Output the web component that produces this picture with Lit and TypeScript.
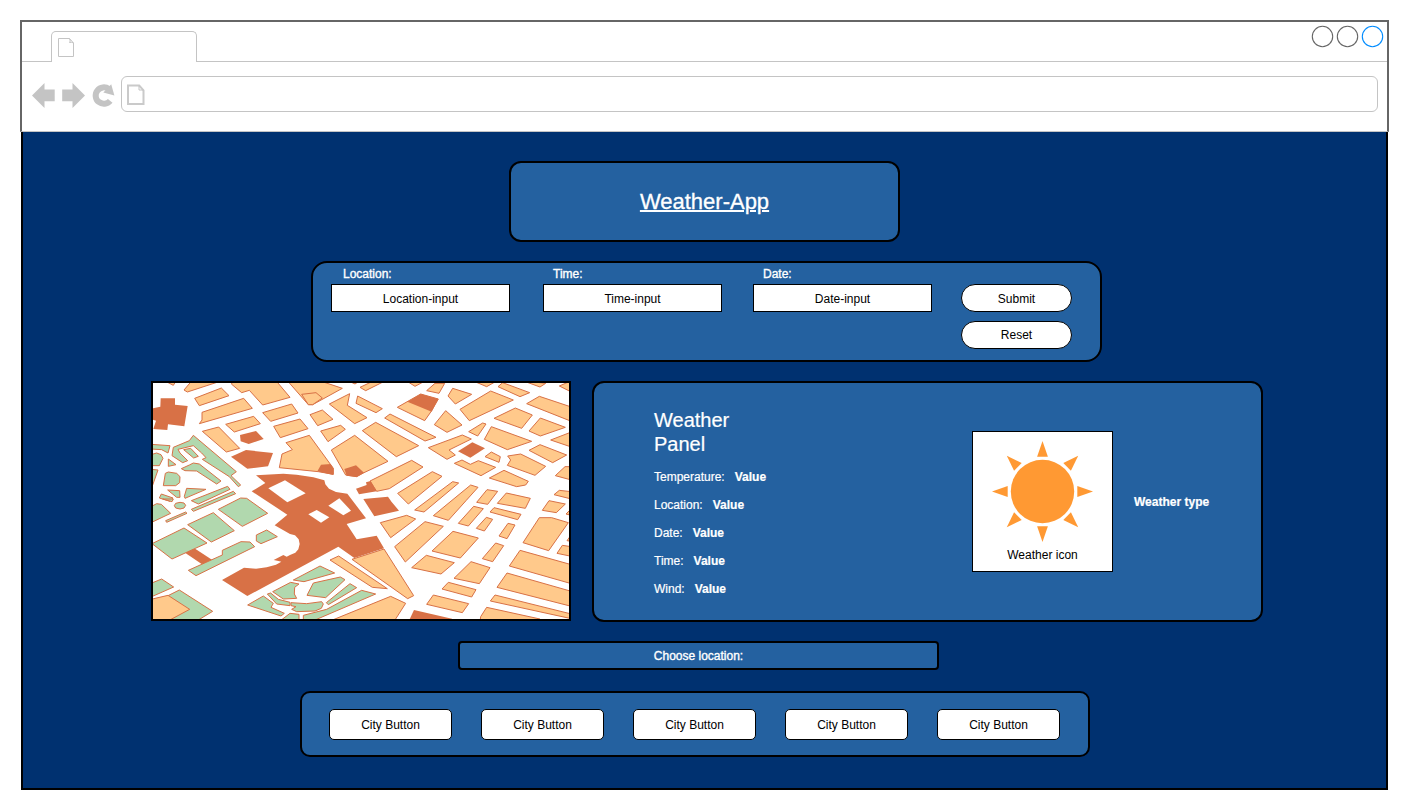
import { LitElement, html, svg, css } from "lit";
import { customElement, property } from "lit/decorators.js";

type Kind = "o" | "g" | "d" | "w";
interface Sector { x: number; y: number; shapes: [Kind, string][]; }

// City blocks, three units to a pixel: o = houses, g = parks, d = landmarks, w = courtyards.
const SECTORS: Sector[] = [
  { x: 0, y: 0, shapes: [
    ["o", "45,3 70,16 78,3"],
    ["o", "124,4 102,30 112,36 210,4"],
    ["o", "134,55 214,24 237,47 148,77"],
    ["o", "156,97 281,55 307,85 148,131 156,120"],
    ["o", "244,12 252,2 378,2 420,52 338,75 298,31 275,38"],
    ["o", "338,98 425,72 444,99 362,124"],
    ["o", "371,139 450,117 474,146 391,173"],
    ["o", "227,133 311,109 331,131 253,156"],
    ["o", "157,154 206,141 269,205 229,216"],
    ["o", "408,188 478,166 550,265 550,283 505,275 388,263 396,222 427,209"],
    ["d", "32,55 75,55 75,74 113,78 103,139 54,133 52,150 10,147 18,122 5,118 5,86 31,80"],
    ["d", "270,165 318,153 341,177 296,192 272,184"],
    ["d", "243,230 288,210 369,219 354,259 292,266"],
    ["d", "318,286 400,281 440,284 490,292 523,301 526,313 537,326 558,336 592,341 648,415 590,432 620,478 680,467 702,505 613,534 565,500 292,648 216,600 282,563 318,566 350,562 378,554 394,545 385,543 371,540 400,525 410,530 420,525 436,518 445,508 449,492 446,478 435,466 420,462 374,436 412,404 345,360 305,334 346,309"],
    ["w", "355,325 405,301 467,340 412,367"],
    ["g", "3,193 60,197 54,219 35,209 3,207"],
    ["g", "3,224 20,219 33,224 39,235 28,257 3,257"],
    ["g", "3,268 24,270 7,318 3,318"],
    ["g", "55,237 78,254 55,259"],
    ["g", "46,280 55,276 80,280 90,290 89,308 77,317 40,317"],
    ["g", "53,330 89,332 90,352 80,352"],
    ["g", "110,325 168,328 105,355 103,349"],
    ["g", "28,354 34,342 69,354 60,364"],
    ["g", "70,202 118,182 130,166 259,275 243,287 272,315 265,320 238,290 157,238 168,233 155,219 130,197 84,208 90,219 113,242 98,248 66,227"],
    ["g", "101,209 122,205 145,229 131,234"],
    ["g", "94,266 118,255 130,249 148,252 213,303 200,312 140,273 105,272"],
    ["g", "124,362 233,319 240,328 145,372"],
    ["g", "124,388 250,334 257,341 130,394"],
  ]},
  { x: 420, y: 0, shapes: [
    ["o", "-8,2 88,2 157,25 68,74 55,74"],
    ["o", "35,43 78,38 97,54 68,74 55,74"],
    ["o", "60,104 97,90 129,118 83,137"],
    ["o", "92,153 152,136 166,148 114,185"],
    ["o", "118,72 179,41 172,76 231,113 194,131"],
    ["o", "203,48 277,86 258,98 198,70"],
    ["o", "210,22 250,3 285,3 227,32"],
    ["o", "176,3 208,3 195,12"],
    ["o", "350,3 375,19 405,3"],
    ["o", "322,82 392,42 445,57 423,95 404,122"],
    ["d", "352,65 392,42 445,57 425,95"],
    ["o", "284,114 300,102 438,172 405,183"],
    ["o", "217,152 257,127 386,197 319,230"],
    ["o", "323,340 427,275 456,289 355,372"],
    ["d", "93,254 122,252 130,265 130,285 82,274"],
    ["o", "124,210 194,166 294,244 222,278 200,290 167,285"],
    ["d", "163,267 198,256 222,278 200,291 170,287"],
    ["o", "240,303 365,241 399,261 298,326 260,334"],
    ["d", "198,326 230,315 228,307 242,303 260,334 207,343"],
    ["d", "220,357 294,350 305,366 327,392 253,409"],
  ]},
  { x: 840, y: 0, shapes: [
    ["o", "-10,32 15,10 44,10 27,40"],
    ["o", "68,25 125,43 76,72 54,48"],
    ["o", "90,88 182,33 250,60 118,122"],
    ["o", "130,3 200,3 170,20"],
    ["o", "204,20 218,8 299,38 270,50"],
    ["o", "278,2 347,10 330,21"],
    ["o", "388,18 422,3 424,36"],
    ["o", "290,71 328,49 424,81 424,124"],
    ["o", "192,115 256,84 307,105 275,145"],
    ["o", "297,153 331,114 406,142 331,168"],
    ["o", "362,180 424,156 424,201"],
    ["o", "13,134 47,92 96,135 51,157"],
    ["o", "116,155 158,129 168,132 143,168"],
    ["o", "163,178 184,140 305,184 232,209"],
    ["o", "-5,203 97,165 124,177 57,210 76,225 51,238"],
    ["d", "84,214 127,187 165,205 121,233"],
    ["o", "73,250 96,240 121,253 145,242 197,262 153,287"],
    ["o", "165,230 184,216 211,230 207,247"],
    ["o", "233,228 272,222 347,259 315,286 232,256 242,240"],
    ["o", "297,211 330,194 410,225 368,248"],
    ["o", "376,287 405,260 424,260 424,300"],
    ["o", "178,294 222,271 295,304 287,315 260,320"],
    ["o", "-46,390 68,305 86,309 -18,396"],
    ["o", "10,407 122,315 144,322 108,362 55,421"],
    ["o", "140,367 171,329 203,334 173,373"],
    ["o", "202,370 229,339 301,355 286,385"],
    ["o", "372,344 388,331 424,335 424,357"],
  ]},
  { x: 0, y: 360, shapes: [
    ["d", "105,158 132,144 187,180 156,193"],
    ["g", "205,28 272,-6 290,-5 353,40 277,79"],
    ["g", "113,74 190,38 253,92 184,126"],
    ["g", "6,131 102,84 171,129 66,177"],
    ["g", "115,211 217,165 217,151 273,125 300,126 314,140 138,227"],
    ["g", "319,105 350,90 382,110 333,131 319,123"],
    ["g", "3,250 35,237 71,261 3,291"],
    ["g", "52,288 88,270 188,334 140,363 58,363"],
    ["o", "3,298 54,286 119,328 54,363 3,363"],
    ["g", "73,17 77,10 90,7 102,9 107,16 102,24 90,27 77,24"],
    ["g", "47,62 107,36 111,40 50,67"],
    ["g", "3,20 20,11 34,13 62,40 3,68"],
    ["g", "38,-3 70,-3 66,5"],
    ["g", "293,315 340,288 370,310 363,322 403,340 393,348"],
    ["g", "352,282 362,279 385,298 420,307 420,317 380,312"],
    ["g", "368,275 422,247 447,252 434,262 433,282 440,295 400,297"],
    ["g", "390,363 420,340 447,343 447,363"],
  ]},
  { x: 420, y: 360, shapes: [
    ["w", "55,43 80,30 118,52 93,68"],
    ["w", "115,17 148,-5 183,32 160,46"],
    ["o", "271,68 350,46 377,57 302,113"],
    ["o", "186,178 282,147 371,287 353,296"],
    ["o", "120,180 146,168 292,266 247,262"],
    ["o", "120,363 302,289 347,310 313,363"],
    ["o", "314,140 405,65 460,79 346,186"],
    ["o", "365,203 409,166 493,188 453,222"],
    ["g", "10,240 90,198 134,219 42,245"],
    ["g", "51,286 70,249 151,231 165,239 107,293"],
    ["g", "3,308 50,311 95,305 100,312 94,325 75,333 20,335 5,328 18,320 3,317"],
    ["g", "109,308 180,251 200,263 115,314"],
    ["g", "40,346 110,328 215,271 257,282 80,358 40,363"],
  ]},
  { x: 840, y: 360, shapes: [
    ["o", "357,2 406,12 379,38 337,31"],
    ["o", "85,70 131,19 160,26 115,78"],
    ["o", "139,85 169,52 188,58 163,93"],
    ["o", "180,36 192,23 273,43 263,59"],
    ["o", "207,108 234,70 255,75 231,116"],
    ["o", "279,128 328,53 365,53 415,68 356,152"],
    ["o", "408,42 424,26 424,46"],
    ["o", "411,122 424,104 424,124"],
    ["o", "381,160 397,136 424,140 424,169"],
    ["o", "6,153 69,94 145,114 91,174"],
    ["o", "157,176 197,129 221,137 188,185"],
    ["o", "72,235 123,185 180,203 148,251"],
    ["o", "238,198 270,151 424,194 424,251"],
    ["o", "201,262 231,219 424,274 424,319"],
    ["o", "36,267 55,247 138,269 125,291"],
    ["o", "181,303 195,285 424,342 424,356"],
    ["o", "-10,313 10,285 116,311 97,338"],
    ["o", "152,350 170,322 330,357 330,366 150,366"],
    ["d", "-65,366 -48,330 66,356 66,366"],
  ]},
];

@customElement("city-map")
class CityMap extends LitElement {
  static styles = css`
    :host { display: block; box-sizing: border-box; border: 2px solid #000; background: #fff; }
    svg { display: block; width: 100%; height: 100%; }
    polygon { stroke: #d87146; stroke-width: 3; }
    .o { fill: #ffc98b; }
    .g { fill: #b1d8ae; }
    .d { fill: #d87146; stroke: none; }
    .w { fill: #fff; stroke: none; }
  `;
  render() {
    return html`<svg viewBox="9 9 1248 708" preserveAspectRatio="none">
      ${SECTORS.map((s) => svg`<g transform="translate(${s.x} ${s.y})">
        ${s.shapes.map(([k, p]) => svg`<polygon class=${k} points=${p}></polygon>`)}
      </g>`)}
    </svg>`;
  }
}

@customElement("browser-chrome")
class BrowserChrome extends LitElement {
  static styles = css`
    :host { display: block; box-sizing: border-box; background: #fff; }
    .strip { display: flex; height: 40px; align-items: flex-end; }
    .lead { width: 29px; border-bottom: 1px solid #c4c4c4; }
    .tab { box-sizing: border-box; width: 146px; height: 31px; border: 1px solid #c4c4c4; border-bottom: 0; border-radius: 5px 5px 0 0; padding: 6px 0 0 6px; }
    .rest { flex: 1; height: 39px; border-bottom: 1px solid #c4c4c4; display: flex; justify-content: flex-end; gap: 3px; }
    .rest svg { margin-top: 3px; overflow: visible; }
    .rest svg:last-child { margin-right: 4px; }
    svg { display: block; fill: none; }
    .bar { display: flex; padding: 14px 9px 0 9px; }
    .nav { flex: none; margin-top: 5px; }
    .address { flex: 1; box-sizing: border-box; height: 36px; border: 1px solid #c4c4c4; border-radius: 6px; margin-left: 5px; padding: 7px 0 0 5px; }
  `;
  private dot(color: string) {
    return html`<svg width="22" height="22"><circle cx="11.5" cy="11.5" r="10.2" stroke=${color} stroke-width="1.1"></circle></svg>`;
  }
  render() {
    return html`
      <div class="strip">
        <div class="lead"></div>
        <div class="tab"><svg width="17" height="20"><path d="M.5.5H11.5L15.5 5V18.5H.5ZM11.5.5Q13 3.5 11.5 4.5 14 3.8 15.5 5" stroke="#c4c4c4"></path></svg></div>
        <div class="rest">${this.dot("#666")}${this.dot("#666")}${this.dot("#008cff")}</div>
      </div>
      <div class="bar">
        <svg class="nav" width="85" height="28" viewBox="0 0 85 28">
          <path fill="#c4c4c4" d="M1 14.5 13.5 2V8.5H23.7V20.2H13.5V27ZM54 14.5 41.5 2V8.5H31.2V20.2H41.5V27Z"></path>
          <path stroke="#c4c4c4" stroke-width="6" d="M79.2 19.8A8.2 8.2 0 1 1 77.8 8"></path>
          <path fill="#c4c4c4" d="M72.3 11.6 80.2 3.2 83.4 14.6Z"></path>
        </svg>
        <div class="address"><svg width="19" height="22"><path d="M1 1.5H12.2L16.5 6.3V20H1Z" stroke="#cacaca" stroke-width="2"></path><path d="M12 1.5V6H16.5" stroke="#c4c4c4"></path></svg></div>
      </div>`;
  }
}

@customElement("input-field")
class InputField extends LitElement {
  @property() label = "";
  @property() hint = "";
  static styles = css`
    :host { display: block; width: 179px; }
    .label { height: 21px; line-height: 22px; padding-left: var(--label-inset, 12px); color: #fff; -webkit-text-stroke: 0.35px #fff; }
    .box { box-sizing: border-box; height: 28px; border: 1px solid #000; background: #fff; color: #000; text-align: center; line-height: 28px; }
  `;
  render() {
    return html`<div class="label">${this.label}</div><div class="box">${this.hint}</div>`;
  }
}

@customElement("app-root")
class AppRoot extends LitElement {
  static styles = css`
    :host { display: block; box-sizing: border-box; width: 1408px; height: 810px; padding: 20px 0 0 21px; background: #fff; font: 12px "Liberation Sans", Arial, sans-serif; color: #000; }
    .window { box-sizing: border-box; width: 1367px; height: 770px; background: #003170; border: 2px solid #000; border-top: 0; display: flex; flex-direction: column; }
    browser-chrome { flex: none; margin: 0 -3px; height: 112px; border: 2px solid #666; border-bottom: 1px solid #c4c4c4; }
    .panel { box-sizing: border-box; background: #2461a0; border: 2px solid #000; flex: none; }
    .title { margin: 29px 0 0 486px; width: 391px; height: 81px; border-radius: 12px; display: flex; align-items: center; justify-content: center; color: #fff; font-size: 22px; text-decoration: underline; text-decoration-thickness: 2px; -webkit-text-stroke: 0.3px #fff; }
    .form { margin: 19px 0 0 288px; width: 791px; height: 101px; border-radius: 16px; display: flex; padding: 0 0 0 18px; }
    .time { margin-left: 33px; --label-inset: 10px; }
    .date { margin-left: 31px; --label-inset: 10px; }
    .actions { margin: 21px 0 0 29px; display: grid; gap: 9px; align-content: start; }
    .pill { box-sizing: border-box; width: 111px; height: 28px; border: 1px solid #000; border-radius: 14px; background: #fff; text-align: center; line-height: 28px; }
    .reset { line-height: 26px; }
    .middle { display: flex; gap: 21px; margin: 19px 0 0 128px; flex: none; }
    city-map { width: 420px; height: 240px; }
    .weather { width: 671px; height: 241px; border-radius: 12px; display: flex; color: #fff; }
    .facts { padding: 25px 0 0 60px; width: 318px; }
    .heading { font-size: 20px; line-height: 24px; width: 90px; margin-bottom: 7px; -webkit-text-stroke: 0.2px #fff; }
    .fact { display: flex; gap: 10px; height: 28px; line-height: 28px; -webkit-text-stroke: 0.2px #fff; }
    .card { box-sizing: border-box; width: 141px; height: 141px; margin-top: 48px; border: 1px solid #000; background: #fff; color: #000; text-align: center; }
    .card svg { display: block; margin: 9px auto 0; }
    .caption { margin-top: 6px; line-height: 14px; }
    .kind { margin: 112px 0 0 21px; line-height: 14px; font-weight: bold; -webkit-text-stroke: 0.2px #fff; }
    .choose { margin: 19px 0 0 435px; width: 481px; height: 29px; border-radius: 4px; color: #fff; text-align: center; line-height: 27px; -webkit-text-stroke: 0.35px #fff; }
    .cities { margin: 21px 0 0 277px; width: 790px; height: 66px; border-radius: 10px; display: flex; gap: 29px; padding: 16px 0 0 27px; }
    .city { box-sizing: border-box; width: 123px; height: 31px; border: 1px solid #000; border-radius: 5px; background: #fff; text-align: center; line-height: 30px; }
  `;
  render() {
    const facts = ["Temperature:", "Location:", "Date:", "Time:", "Wind:"];
    const rays = [0, 45, 90, 135, 180, 225, 270, 315];
    return html`
      <div class="window">
        <browser-chrome></browser-chrome>
        <div class="panel title">Weather-App</div>
        <div class="panel form">
          <input-field label="Location:" hint="Location-input"></input-field>
          <input-field class="time" label="Time:" hint="Time-input"></input-field>
          <input-field class="date" label="Date:" hint="Date-input"></input-field>
          <div class="actions"><div class="pill">Submit</div><div class="pill reset">Reset</div></div>
        </div>
        <div class="middle">
          <city-map></city-map>
          <div class="panel weather">
            <div class="facts">
              <div class="heading">Weather Panel</div>
              ${facts.map((f) => html`<div class="fact"><span>${f}</span><b>Value</b></div>`)}
            </div>
            <div class="card">
              <svg width="101" height="101" viewBox="-50.5 -50.5 101 101" fill="#ff9933">
                <circle r="31.7"></circle>
                ${rays.map((a) => svg`<path transform="rotate(${a})" d="M0-50.5 5.4-34.8H-5.4Z"></path>`)}
              </svg>
              <div class="caption">Weather icon</div>
            </div>
            <div class="kind">Weather type</div>
          </div>
        </div>
        <div class="panel choose">Choose location:</div>
        <div class="panel cities">${[1, 2, 3, 4, 5].map(() => html`<div class="city">City Button</div>`)}</div>
      </div>`;
  }
}
